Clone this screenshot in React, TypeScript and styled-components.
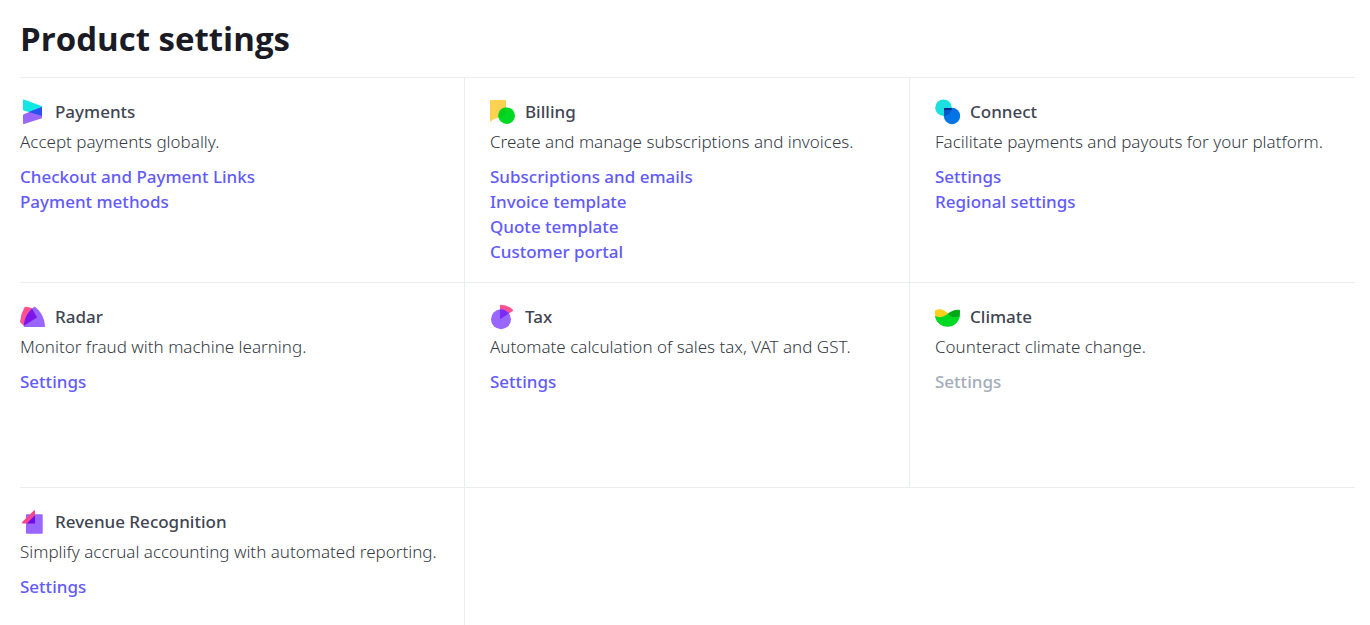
import React from "react";
import styled, { createGlobalStyle } from "styled-components";

const GlobalStyle = createGlobalStyle`
  *, *::before, *::after { box-sizing: border-box; }
  body {
    margin: 0;
    background: #ffffff;
    color: #353a44;
    font-family: "Segoe UI", "Noto Sans", "Open Sans", sans-serif;
    font-size: 17px;
    line-height: 25px;
  }
`;

const Page = styled.main`
  display: flex;
  flex-direction: column;
  min-height: 100vh;
  padding: 0 15px 0 20px;
`;

const Title = styled.h1`
  margin: 0;
  padding: 17px 0 16px;
  color: #1a1b25;
  font-family: "Segoe UI", "Open Sans", sans-serif;
  font-size: 33px;
  font-weight: 700;
  line-height: 44px;
`;

const Grid = styled.div`
  flex: 1;
  display: grid;
  grid-template-columns: repeat(3, minmax(0, 1fr));
  grid-template-rows: repeat(2, minmax(205px, auto)) 1fr;
  border-top: 1px solid #ebeef1;
`;

const Cell = styled.section`
  padding: 21px 0 18px 25px;
  border-right: 1px solid #ebeef1;
  border-bottom: 1px solid #ebeef1;

  &:nth-child(3n + 1) { padding-left: 0; }
  &:nth-child(3n) { border-right: 0; }
  &:last-child { border-bottom: 0; }
`;

const Head = styled.div`
  display: flex;
  align-items: center;
  gap: 10px;
`;

const Icon = styled.svg`
  flex: none;
  width: 25px;
  height: 25px;
  overflow: visible;
`;

const Name = styled.h2`
  margin: 0;
  color: #414552;
  font-size: 17px;
  font-weight: 500;
  line-height: 25px;
`;

const Description = styled.p`
  margin: 5px 0 10px;
  font-weight: 300;
  white-space: nowrap;
`;

const Links = styled.ul`
  margin: 0;
  padding: 0;
  list-style: none;
`;

const SettingsLink = styled.a<{ $muted?: boolean }>`
  color: ${(p) => (p.$muted ? "#a3acba" : "#625afa")};
  font-weight: 500;
  text-decoration: none;
`;

type Product = {
  name: string;
  description: string;
  links: string[];
  muted?: boolean;
  icon: React.ReactNode;
};

const products: Product[] = [
  {
    name: "Payments",
    description: "Accept payments globally.",
    links: ["Checkout and Payment Links", "Payment methods"],
    icon: (
      <>
        <path d="M3 1.300Q3 .3 4 .6L21.300 7Q22 7.300 22 8V16.700L3.600 11.600Q3 11.400 3 10.700Z" fill="#11e8e3" />
        <path d="M3 16.400Q3 15.500 3.700 15.200L22 7.900V18.400Q22 19.100 21.300 19.400L4 25Q3 25.300 3 24.300Z" fill="#9966ff" />
        <path d="M8.600 13L22 7.900V16.700Z" fill="#2a50ee" />
      </>
    ),
  },
  {
    name: "Billing",
    description: "Create and manage subscriptions and invoices.",
    links: ["Subscriptions and emails", "Invoice template", "Quote template", "Customer portal"],
    icon: (
      <>
        <path d="M0 1.700Q0 1 .7 1H15.300Q16 1 16 1.700V12C16 17 12 18.500 8 19C5 19.400 2.500 20.500 .8 22.500Q0 23 0 22Z" fill="#ffd150" />
        <circle cx="16.700" cy="16.700" r="8.300" fill="#00d924" />
        <path d="M16 8.400V12C16 17 12 18.400 8.500 18.800A8.300 8.300 0 0 1 16 8.400Z" fill="#00d01c" />
      </>
    ),
  },
  {
    name: "Connect",
    description: "Facilitate payments and payouts for your platform.",
    links: ["Settings", "Regional settings"],
    icon: (
      <>
        <circle cx="8.500" cy="8.700" r="8.300" fill="#1ce0e0" />
        <circle cx="17" cy="17" r="8.200" fill="#0073e6" />
        <path d="M9 9H16.800A8.300 8.300 0 0 1 9 17Z" fill="#0055c8" />
        <path d="M9 9H16.500V11H9Z" fill="#00298f" />
      </>
    ),
  },
  {
    name: "Radar",
    description: "Monitor fraud with machine learning.",
    links: ["Settings"],
    icon: (
      <>
        <path d="M4.500 3.300Q4.800 2.600 5.600 2.700Q9 2.900 12 4.300L17 13.500L4 22L.4 18.500Q0 18 .1 17.400Q1 9.500 4.500 3.300Z" fill="#ff5191" />
        <path d="M14 3.100Q14.600 2.500 15.300 3.100C21.300 8 24.600 14.500 25 22.200Q25 23 24.200 23H4.500Q3.800 23 3.800 22.300C4 14.500 8 7.700 14 3.100Z" fill="#9966ff" />
        <path d="M12.200 4.700L17 13.500L3.900 21.800C4 14.700 7.300 8.800 12.200 4.700Z" fill="#7e16ec" />
      </>
    ),
  },
  {
    name: "Tax",
    description: "Automate calculation of sales tax, VAT and GST.",
    links: ["Settings"],
    icon: (
      <>
        <path d="M10 1.500Q10 .7 10.800 .7Q18 .9 22.900 5.800Q23.400 6.400 22.800 6.900L10 15.300Z" fill="#ff5191" />
        <circle cx="11" cy="15.300" r="10" fill="#9966ff" />
        <path d="M10 5.400A10 10 0 0 1 18 8.400L18.800 9.500L10 15.300Z" fill="#7a2bf8" />
      </>
    ),
  },
  {
    name: "Climate",
    description: "Counteract climate change.",
    links: ["Settings"],
    muted: true,
    icon: (
      <>
        <path d="M0 6.500Q5 4 9.500 6.800L14 10L8 14H.5Q0 12 0 6.500Z" fill="#ffd01b" />
        <path d="M25 7Q25 5.900 24 5.800C19 5.500 16 7.500 12.500 10L18 15L24.500 13Q25 11 25 7Z" fill="#00a818" />
        <path d="M0 12C4 14 7.500 13.500 12.500 10C16 13 20.500 14.300 25 11.800C23.700 18.500 19 22.800 12.700 22.800C6 22.800 1 18.500 0 12Z" fill="#00d924" />
      </>
    ),
  },
  {
    name: "Revenue Recognition",
    description: "Simplify accrual accounting with automated reporting.",
    links: ["Settings"],
    icon: (
      <>
        <path d="M6 14V6Q6 5.300 6.700 5.300H22Q22.700 5.300 22.700 6V24Q22.700 24.800 22 24.800H6.800Q6 24.800 6 24Z" fill="#9966ff" />
        <path d="M13.900 1.400Q15 .7 15 1.800V14.500H2.800Q1.400 14.200 2.200 13Z" fill="#f54790" />
        <path d="M15 6.200V14.500H6.800Z" fill="#6e0cf0" />
      </>
    ),
  },
];

export default function App() {
  return (
    <>
      <GlobalStyle />
      <Page>
        <Title>Product settings</Title>
        <Grid>
          {products.map((product) => (
            <Cell key={product.name}>
              <Head>
                <Icon viewBox="0 0 25 25" aria-hidden="true">{product.icon}</Icon>
                <Name>{product.name}</Name>
              </Head>
              <Description>{product.description}</Description>
              <Links>
                {product.links.map((link) => (
                  <li key={link}>
                    <SettingsLink href="#" $muted={product.muted}>{link}</SettingsLink>
                  </li>
                ))}
              </Links>
            </Cell>
          ))}
        </Grid>
      </Page>
    </>
  );
}
